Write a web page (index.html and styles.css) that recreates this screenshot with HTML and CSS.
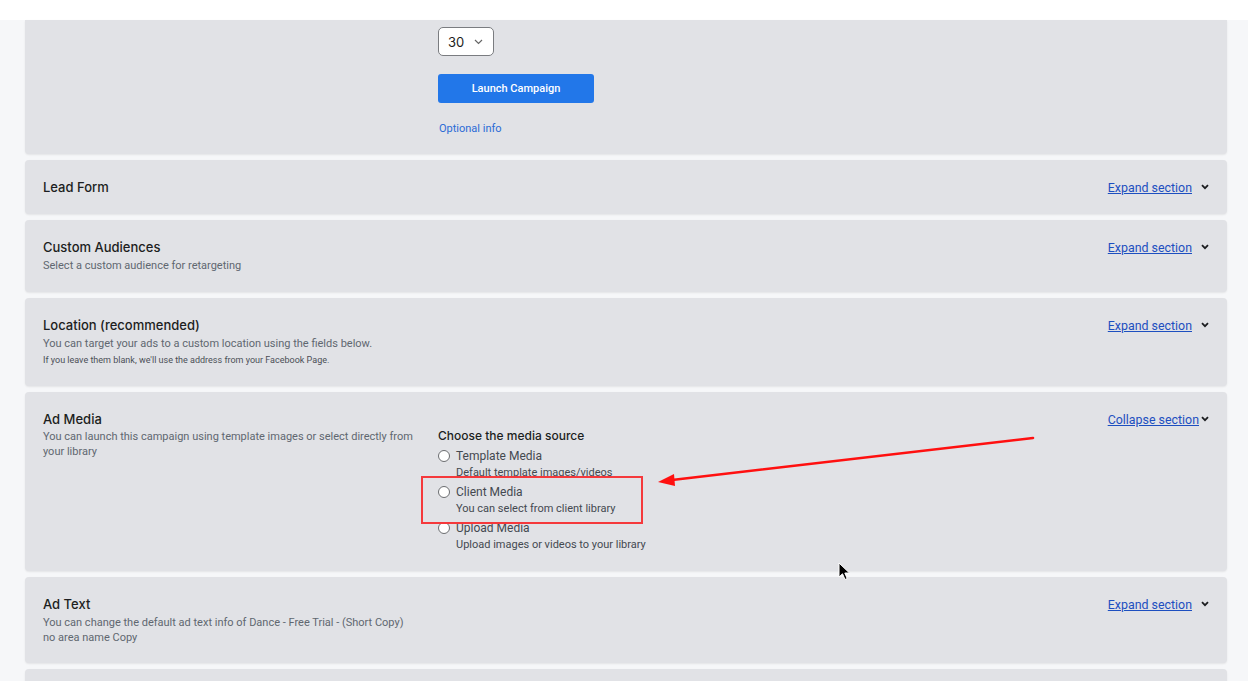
FILE: index.html
```html
<!DOCTYPE html>
<html>
<head>
<meta charset="utf-8">
<link rel="stylesheet" href="styles.css">
</head>
<body>
<div class="topbar"></div>
<main class="page">
  <section class="card card-first">
    <div class="body">
      <div class="left"></div>
      <div class="right">
        <div class="select">30 <svg class="sel-chev" width="9" height="6" viewBox="0 0 9 6"><path d="M1 1l3.5 3.5L8 1" fill="none" stroke="#666" stroke-width="1.2"/></svg></div>
        <button class="launch">Launch Campaign</button>
        <a class="optional">Optional info</a>
      </div>
    </div>
  </section>

  <section class="card">
    <div class="head">
      <h3>Lead Form</h3>
      <span class="toggle"><a>Expand section</a><svg class="chev" width="8" height="6" viewBox="0 0 8 6"><path d="M1 1.2l3 3 3-3" fill="none" stroke="#1c1e21" stroke-width="1.8"/></svg></span>
    </div>
  </section>

  <section class="card">
    <div class="head">
      <h3>Custom Audiences</h3>
      <span class="toggle"><a>Expand section</a><svg class="chev" width="8" height="6" viewBox="0 0 8 6"><path d="M1 1.2l3 3 3-3" fill="none" stroke="#1c1e21" stroke-width="1.8"/></svg></span>
    </div>
    <p class="sub">Select a custom audience for retargeting</p>
  </section>

  <section class="card">
    <div class="head">
      <h3>Location (recommended)</h3>
      <span class="toggle"><a>Expand section</a><svg class="chev" width="8" height="6" viewBox="0 0 8 6"><path d="M1 1.2l3 3 3-3" fill="none" stroke="#1c1e21" stroke-width="1.8"/></svg></span>
    </div>
    <p class="sub">You can target your ads to a custom location using the fields below.</p>
    <p class="small">If you leave them blank, we'll use the address from your Facebook Page.</p>
  </section>

  <section class="card">
    <div class="head">
      <h3>Ad Media</h3>
      <span class="toggle"><a>Collapse section</a><svg class="chev tight" width="8" height="6" viewBox="0 0 8 6"><path d="M1 1.2l3 3 3-3" fill="none" stroke="#1c1e21" stroke-width="1.8"/></svg></span>
    </div>
    <div class="body">
      <p class="sub left desc">You can launch this campaign using template images or select directly from your library</p>
      <div class="right media">
        <div class="choose">Choose the media source</div>
        <label class="radio"><span class="dot"></span><span class="rl">Template Media</span></label>
        <div class="rsub">Default template images/videos</div>
        <label class="radio"><span class="dot"></span><span class="rl">Client Media</span></label>
        <div class="rsub">You can select from client library</div>
        <label class="radio"><span class="dot"></span><span class="rl">Upload Media</span></label>
        <div class="rsub">Upload images or videos to your library</div>
      </div>
    </div>
  </section>

  <section class="card">
    <div class="head">
      <h3>Ad Text</h3>
      <span class="toggle"><a>Expand section</a><svg class="chev" width="8" height="6" viewBox="0 0 8 6"><path d="M1 1.2l3 3 3-3" fill="none" stroke="#1c1e21" stroke-width="1.8"/></svg></span>
    </div>
    <p class="sub desc">You can change the default ad text info of Dance - Free Trial - (Short Copy)<br>no area name Copy</p>
  </section>

  <section class="card card-last"></section>
</main>

<div class="highlight"></div>
<svg class="arrow" width="1248" height="681" viewBox="0 0 1248 681">
  <line x1="1033" y1="438" x2="672" y2="480" stroke="#ff1010" stroke-width="2.6" stroke-linecap="round"/>
  <path d="M658 482 L674 474 L675 486 Z" fill="#ff1010"/>
</svg>
<svg class="cursor" width="14" height="20" viewBox="0 0 14 20">
  <path d="M1 1 L1 15 L4.5 11.8 L7 17.5 L9.2 16.5 L6.8 11 L11.5 11 Z" fill="#000" stroke="#fff" stroke-width="1"/>
</svg>
</body>
</html>
```

FILE: styles.css
```css
html, body {
  margin: 0;
  padding: 0;
}
body {
  background: #f6f7f9;
  font-family: "Inter", "Roboto", "Liberation Sans", sans-serif;
  color: #1c1e21;
  width: 1248px;
  height: 681px;
  overflow: hidden;
  position: relative;
}
.topbar {
  height: 20px;
  background: #ffffff;
}
.page {
  padding: 0 21px 0 25px;
  display: flex;
  flex-direction: column;
  gap: 6px;
}
.card {
  background: #e1e2e6;
  border-radius: 4px;
  box-shadow: 0 1px 2px rgba(0,0,0,0.08);
  padding: 18px 17px 18px 18px;
}
.card-first {
  border-radius: 0 0 4px 4px;
  padding-top: 7px;
  padding-bottom: 17px;
}
.card-last {
  height: 30px;
  padding: 0;
}
.head {
  display: flex;
  justify-content: space-between;
  align-items: center;
  height: 18px;
}
h3 {
  margin: 0;
  font-size: 13px;
  font-weight: 500;
  line-height: 18px;
  color: #1c1e21;
}
.toggle {
  display: flex;
  align-items: center;
  font-family: "Roboto", sans-serif;
  font-size: 12.4px;
  margin-right: 1px;
}
.toggle a {
  color: #1d4fc0;
  text-decoration: underline;
}
.chev {
  margin-left: 9px;
}
.chev.tight {
  margin-left: 2px;
}
.sub {
  margin: 2px 0 0;
  font-family: "Roboto", sans-serif;
  font-size: 11px;
  line-height: 16px;
  color: #606770;
}
.small {
  margin: 0;
  font-family: "Roboto", sans-serif;
  font-size: 9px;
  line-height: 16px;
  color: #4b4f56;
}
.desc {
  line-height: 15px;
  margin-top: 2px;
}
.body {
  display: grid;
  grid-template-columns: 380px 1fr;
  column-gap: 15px;
}
.left {
  margin: 1px 0 0;
}
.right {
  display: flex;
  flex-direction: column;
  align-items: flex-start;
}
.select {
  box-sizing: border-box;
  width: 56px;
  height: 29px;
  border: 1px solid #7a7c80;
  border-radius: 5px;
  background: #fff;
  font-size: 13px;
  color: #1c1e21;
  display: flex;
  align-items: center;
  padding-left: 9px;
  gap: 10px;
}
.launch {
  margin-top: 18px;
  width: 156px;
  height: 29px;
  border: 0;
  border-radius: 3px;
  background: #2277e9;
  color: #fff;
  font-family: "Roboto", sans-serif;
  font-size: 11px;
  font-weight: 500;
}
.optional {
  margin-top: 18px;
  margin-left: 1px;
  font-family: "Roboto", sans-serif;
  font-size: 11px;
  color: #2b6bd6;
  line-height: 16px;
}
.choose {
  font-size: 12px;
  font-weight: 500;
  line-height: 16px;
  color: #1c1e21;
  margin-bottom: 1px;
}
.radio {
  display: flex;
  align-items: center;
  margin-top: 3px;
  height: 16px;
}
.dot {
  box-sizing: border-box;
  width: 12px;
  height: 12px;
  border: 1px solid #6b6d70;
  border-radius: 50%;
  background: #fff;
  margin-right: 6px;
}
.rl {
  font-family: "Roboto", sans-serif;
  font-size: 12px;
  color: #444950;
}
.rsub {
  font-family: "Roboto", sans-serif;
  font-size: 11px;
  line-height: 16px;
  color: #444950;
  margin-left: 18px;
  margin-top: 1px;
}
.highlight {
  position: absolute;
  left: 421px;
  top: 476px;
  width: 218px;
  height: 44px;
  border: 2px solid #f5393c;
}
.arrow {
  position: absolute;
  left: 0;
  top: 0;
  pointer-events: none;
}
.cursor {
  position: absolute;
  left: 838px;
  top: 562px;
}
```
